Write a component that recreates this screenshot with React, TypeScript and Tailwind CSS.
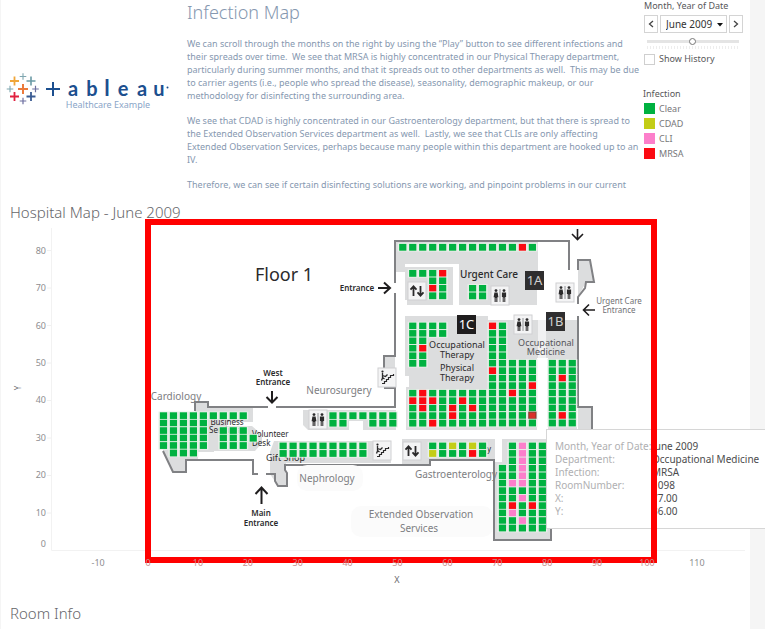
import React from "react";

const roomColors: Record<string, string> = {
  G: "#00b140",
  R: "#fb0a12",
  C: "#c3cd16",
  P: "#fc7fcb",
  D: "#d8302a",
};

// [column index, y of the first room, one letter for each room going down]
const roomColumns: [number, number, string][] = [
  [0, 415.7, "GGGGG"],
  [1, 415.7, "GGGGGG"],
  [2, 415.7, "GGGGGG"],
  [3, 415.7, "GGGGGG"],
  [4, 415.7, "GGGGG"],
  [5, 415.7, "G"],
  [6, 415.7, "G.GGG"],
  [7, 415.7, "G.GGG"],
  [8, 415.7, "G.GGG"],
  [9, 438.2, "G"],
  [12, 446, "GG"],
  [13, 446, "GG"],
  [14, 446, "GG"],
  [15, 446, "GG"],
  [16, 446, "GG"],
  [17, 446, "GG"],
  [18, 446, "GG"],
  [19, 446, "GG"],
  [20, 446, "GG"],
  [17, 415.7, "GG"],
  [18, 415.7, "GG"],
  [19, 415.7, "G"],
  [20, 415.7, "G"],
  [21, 415.7, "GG"],
  [22, 415.7, "GG"],
  [23, 415.7, "GG"],
  [27, 446, "GC"],
  [28, 446, "GG"],
  [29, 446, "CG"],
  [30, 446, "GG"],
  [31, 446, "CR"],
  [32, 446, "GG"],
  [25, 393.3, "GRGGG"],
  [26, 393.3, "RRRGG"],
  [27, 393.3, "GRGGR"],
  [28, 393.3, "GGGGG"],
  [29, 393.3, "GGRRG"],
  [30, 393.3, "GRGGG"],
  [31, 393.3, "GGRGG"],
  [32, 393.3, "GGGGG"],
  [33, 326, "RGGGGGRGGGGGGG"],
  [34, 326, "GGGGGGGGGGGGGG"],
  [35, 363.3, "GGGGRGGGG"],
  [36, 363.3, "GGGGGGGGG"],
  [37, 363.3, "GGGRGGGDG"],
  [39, 363.3, "GGGGGGGGG"],
  [40, 363.3, "GGRGGGGRG"],
  [41, 363.3, "GGGGGGGGG"],
  [24, 247.3, "G"],
  [25, 247.3, "G"],
  [26, 247.3, "G"],
  [27, 247.3, "G"],
  [28, 247.3, "G"],
  [29, 247.3, "G"],
  [30, 247.3, "G"],
  [31, 247.3, "G"],
  [32, 247.3, "G"],
  [33, 247.3, "G"],
  [34, 247.3, "G"],
  [35, 247.3, "G"],
  [36, 247.3, "R"],
  [37, 247.3, "G"],
  [25, 273.4, "G"],
  [26, 273.4, "G"],
  [27, 273.4, "GGRG"],
  [28, 273.4, "RGGG"],
  [31, 288.4, "GG"],
  [32, 288.4, "GG"],
  [25, 326, "GGGGGG"],
  [26, 326, "GGGRGG"],
  [27, 326, "GG"],
  [28, 326, "GG"],
  [34, 468.3, "GGGGGGGGG"],
  [35, 446, "GGGGGPGGRPGG"],
  [36, 446, "PPPPPPGPGGPG"],
  [37, 446, "GGGGGGGGRGGG"],
  [38, 446, "GGGGGGGGGGGG"],
];

function Rooms() {
  return (
    <g>
      {roomColumns.map(([col, top, rooms], n) =>
        rooms.split("").map((kind, row) => {
          if (kind === ".") return null;
          const x = 163.5 + col * 9.97;
          const y = top + row * 7.46;
          return (
            <g key={`${n}-${row}`}>
              <rect x={x - 5} y={y - 4.2} width={10} height={8.4} fill="#e9f0ea" />
              <rect
                x={x - 3.6}
                y={y - 3.4}
                width={7.2}
                height={6.8}
                fill={roomColors[kind]}
                stroke={kind === "D" ? "#7a3a2e" : "none"}
                strokeWidth={1}
              />
            </g>
          );
        }),
      )}
    </g>
  );
}

function Restroom({ x, y }: { x: number; y: number }) {
  return (
    <g transform={`translate(${x} ${y})`}>
      <rect width="18" height="19" fill="#f4f4f5" stroke="#cfd0d2" strokeWidth="1" />
      <path d="M9 3V16" stroke="#77787b" strokeWidth="0.8" />
      <g fill="#2b2a2b">
        <circle cx="5" cy="4.6" r="1.4" />
        <path d="M3.4 6.4H6.6L7.4 11.2H6.4V16H5.3V12H4.7V16H3.6V11.2H2.6Z" />
        <circle cx="13" cy="4.6" r="1.4" />
        <path d="M10.9 6.4H15.1V11H14.3V16H13.3V11.5H12.7V16H11.7V11H10.9Z" />
      </g>
    </g>
  );
}

function Elevator({ x, y }: { x: number; y: number }) {
  return (
    <g transform={`translate(${x} ${y})`}>
      <rect width="18" height="18" fill="#f4f4f5" stroke="#cfd0d2" strokeWidth="1" />
      <path
        d="M5.5 14V4.5M2.5 7.7L5.5 4.4L8.5 7.7M12.5 4V13.5M9.5 10.3L12.5 13.6L15.5 10.3"
        fill="none"
        stroke="#2b2a2b"
        strokeWidth="1.8"
      />
    </g>
  );
}

function Stairs({ x, y }: { x: number; y: number }) {
  return (
    <g transform={`translate(${x} ${y})`}>
      <rect width="18" height="19" fill="#f4f4f5" stroke="#cfd0d2" strokeWidth="1" />
      <path d="M4 15.500H6.500V13.500H8.500V11.500H10.500V9.500H12.500V7.500H15.500V6" fill="none" stroke="#2b2a2b" strokeWidth="1.2" />
      <path d="M4.500 5V10L3.500 12.500M4.500 7.500L7.500 8.500L9.500 6.500M4.500 9.500L6.500 11" fill="none" stroke="#2b2a2b" strokeWidth="1.3" />
      <circle cx="4.5" cy="3.6" r="1.1" fill="#2b2a2b" />
    </g>
  );
}

function Badge({ x, y, label, faint }: { x: number; y: number; label: string; faint?: boolean }) {
  return (
    <g>
      <rect x={x} y={y} width="19" height="19" fill={faint ? "#2f2e2f" : "#1f1d1e"} />
      <text x={x + 9.5} y={y + 14} textAnchor="middle" fontSize="13" fill={faint ? "#d0d0d0" : "#ffffff"}>
        {label}
      </text>
    </g>
  );
}

const yTicks = [80, 70, 60, 50, 40, 30, 20, 10];
const xTicks = [-10, 0, 10, 20, 30, 40, 50, 60, 70, 80, 90, 100, 110];

function HospitalMap() {
  return (
    <svg viewBox="1 220 749 370" className="block w-full overflow-visible" fontFamily="'Noto Sans', sans-serif" role="img" aria-label="Hospital map">
      {/* shaded departments */}
      <g fill="#dcddde">
        <path d="M396 242H545V273H535V305H453V264H405V272H396Z" />
        <path d="M405 267H453V305H407V300H405Z" />
        <path d="M459 268H537V305H459Z" />
        <path d="M405 316H488V387H409V376H405Z" />
        <path d="M406 387H488V430H406Z" />
        <path d="M488 320H577V430H488Z" />
        <path d="M578 408H592V430H578Z" />
        <path d="M578 261H590L594 282H586L578 297Z" />
        <path d="M385 357H395V388H385Z" />
        <path d="M195 402H208V408H253V422H227V426H252L262 435V443L255 451H214V452H198V459H186V472H173L163 450V412H195Z" />
        <path d="M274 441H391V463H286V486H278L270 474V452Z" />
        <path d="M303 410H396V430H308L303 425Z" />
        <path d="M402 439H495V459H430V464H402Z" />
        <path d="M502 439H550V540H495V462H502Z" />
      </g>
      <g fill="#ffffff">
        <path d="M396 272H405V306H396Z" />
        <path d="M537 358H548V430H537Z" />
        <path d="M538 316H546V358H538Z" fillOpacity="0.6" />
        <path d="M538 242H568V316H538Z" />
        <path d="M349 421H363V430H349Z" />
        <path d="M453 264H459V306H453Z" />
      </g>

      {/* outer walls */}
      <g fill="none" stroke="#808184" strokeWidth="2">
        <path d="M195 411V402H208V407H268" />
        <path d="M276 407H395V388H384" />
        <path d="M384 368V356H395V293" />
        <path d="M395 283V241H569V270" />
        <path d="M578 270V260H590L594 282H586L585 288L578 297V304" />
        <path d="M578 316V407H592V430" />
        <path d="M163 451L173 472H186V460H253V474H258" />
        <path d="M266 474H275V481L278 486H287V473L285 470V465H430V460H494V540H551V529" />
      </g>

      <g fill="#fbfbfb">
        <rect x="297" y="465" width="66" height="26" rx="10" />
        <rect x="351" y="506" width="142" height="31" rx="10" />
      </g>

      {/* text printed on the plan */}
      <g fill="#2b2a2b" textAnchor="middle" fontSize="9">
        <text x="284" y="281" fontSize="18">Floor 1</text>
        <g fontSize="8" fontWeight="600">
          <text x="357" y="291">Entrance</text>
          <text x="273" y="376">West</text>
          <text x="273" y="385">Entrance</text>
          <text x="261" y="516">Main</text>
          <text x="261" y="526">Entrance</text>
          <text x="489" y="278" fontSize="10" fontWeight="500">Urgent Care</text>
        </g>
        <text x="457" y="348">Occupational</text>
        <text x="457" y="358">Therapy</text>
        <text x="457" y="371">Physical</text>
        <text x="457" y="381">Therapy</text>
        <text x="546" y="346" fill="#55555a">Occupational</text>
        <text x="546" y="355" fill="#55555a">Medicine</text>
        <g fontSize="8">
          <text x="227" y="425">Business</text>
          <text x="209" y="433" textAnchor="start">Services</text>
          <text x="252" y="437" textAnchor="start">Volunteer</text>
          <text x="252" y="446" textAnchor="start">Desk</text>
          <text x="266" y="461" fontSize="9" textAnchor="start">Gift Shop</text>
          <text x="489" y="452">y</text>
        </g>
        <g fontSize="8" fill="#707074">
          <text x="619" y="304">Urgent Care</text>
          <text x="619" y="313">Entrance</text>
        </g>
      </g>
      <g fill="none" stroke="#1f1d1e" strokeWidth="2">
        <path d="M378 288H389M384 282.500L390 288L384 293.500" />
        <path d="M272 391V402M266.500 397L272 402.500L277.500 397" />
        <path d="M261.500 504V488M255.500 494L261.500 487.500L267.500 494" />
        <path d="M577.500 229V239M572 234L577.500 239.500L583 234" strokeWidth="1.600" />
        <path d="M595 310H584M589 304.500L583.500 310L589 315.500" strokeWidth="1.600" />
      </g>

      <Rooms />

      <Elevator x={408} y={282} />
      <Elevator x={403} y={442} />
      <Restroom x={491} y={286} />
      <Restroom x={556} y={283} />
      <Restroom x={514} y={315} />
      <Restroom x={309} y={410} />
      <Stairs x={378} y={368} />
      <Stairs x={373} y={441} />
      <Badge x={457} y={315} label="1C" />
      <Badge x={525} y={271} label="1A" faint />
      <Badge x={546} y={312} label="1B" faint />

      {/* department names over the rooms */}
      <g fill="#7d7e82" fontSize="10" textAnchor="middle">
        <text x="176" y="400">Cardiology</text>
        <text x="339" y="394">Neurosurgery</text>
        <text x="327" y="482">Nephrology</text>
        <text x="456" y="478">Gastroenterology</text>
        <text x="421" y="518">Extended Observation</text>
        <text x="419" y="532">Services</text>
      </g>

      {/* axes */}
      <path d="M51.500 228V550.500H745" fill="none" stroke="#f2f2f2" />
      <g fontSize="9" fill="#8e8e90">
        {yTicks.map((t) => (
          <g key={t}>
            <path d={`M47 ${550.5 - t * 3.75}H51`} stroke="#f0f0f0" />
            <text x="46" y={553 - t * 3.74} textAnchor="end">{t}</text>
          </g>
        ))}
        <text x="46" y="547" textAnchor="end">0</text>
      </g>
      <text transform="translate(21 388) rotate(-90)" textAnchor="middle" fontSize="8" fill="#6b6b6e">Y</text>
      <text x="397" y="583" textAnchor="middle" fontSize="9" fill="#6b6b6e">X</text>
    </svg>
  );
}

function HighlightAndTicks() {
  return (
    <svg viewBox="1 220 749 370" className="pointer-events-none absolute inset-0 w-full overflow-visible" fontFamily="'Noto Sans', sans-serif" aria-hidden="true">
      <rect x="148" y="222" width="506" height="338" fill="none" stroke="#ff0000" strokeWidth="6" />
      <g fontSize="9" textAnchor="middle">
        {xTicks.map((t) => (
          <text key={t} x={148 + t * 4.99} y="566" fill={t < 0 || t > 100 ? "#8e8e90" : "#c98f8f"}>
            {t}
          </text>
        ))}
      </g>
    </svg>
  );
}

const tooltipRows = [
  ["Month, Year of Date:", "June 2009"],
  ["Department:", "Occupational Medicine"],
  ["Infection:", "MRSA"],
  ["RoomNumber:", "1098"],
  ["X:", "77.00"],
  ["Y:", "36.00"],
];

function Tooltip() {
  return (
    <dl className="absolute left-[545px] top-[209px] grid w-[220px] grid-cols-[97px_1fr] border border-[#d6d6d6] bg-white pt-[10px] pb-[10px] pl-[8px] text-[10px] leading-[13px] whitespace-nowrap">
      {tooltipRows.map(([name, value]) => (
        <React.Fragment key={name}>
          <dt className="text-[#b0b0b2]">{name}</dt>
          <dd className="text-[#4b4b4d]">{value}</dd>
        </React.Fragment>
      ))}
    </dl>
  );
}

const crosses: [number, number, number, string, number][] = [
  [23, 89, 5, "#eb7a3c", 2],
  [14.5, 81, 4.5, "#f0a63a", 1.8],
  [31, 81, 4.5, "#6a9aa5", 1.6],
  [14.5, 96.5, 4.5, "#e0213f", 1.8],
  [31, 96.5, 4.5, "#3b5c93", 1.8],
  [23, 76.5, 3.3, "#7fa6b0", 1.1],
  [10, 89, 3.3, "#7fa6b0", 1.1],
  [35.5, 89, 3.3, "#6d6fa0", 1.2],
  [23, 101, 3.3, "#6d6fa0", 1.2],
];

const logoLetters: [number, string][] = [
  [73, "a"],
  [92, "b"],
  [123, "e"],
  [142, "a"],
  [159, "u"],
];

function Logo() {
  return (
    <svg viewBox="1 70 180 42" className="block h-[42px] w-[180px]" role="img" aria-label="Tableau Healthcare Example">
      {crosses.map(([x, y, r, color, w], i) => (
        <path key={i} d={`M${x - r} ${y}H${x + r}M${x} ${y - r}V${y + r}`} stroke={color} strokeWidth={w} />
      ))}
      <path d="M46 89H60M53 82V96" stroke="#1c4f8f" strokeWidth="2" />
      <g fill="#1c4f8f" fontFamily="Lato, sans-serif" fontSize="20" fontWeight="700" textAnchor="middle">
        {logoLetters.map(([x, c]) => (
          <text key={x} x={x} y="96">{c}</text>
        ))}
        <text x="107" y="96" fontSize="22">l</text>
      </g>
      <circle cx="167.500" cy="87.500" r="1" fill="#1c4f8f" />
      <text x="108" y="108" textAnchor="middle" fontFamily="'Noto Sans', sans-serif" fontSize="9" fill="#8aa5c8">
        Healthcare Example
      </text>
    </svg>
  );
}

const legend = [
  ["Clear", "bg-[#00b140]"],
  ["CDAD", "bg-[#c3cd16]"],
  ["CLI", "bg-[#fc7fcb]"],
  ["MRSA", "bg-[#fb0a12]"],
];

function Filters() {
  return (
    <aside className="w-[106px] shrink-0 text-[9px] leading-[12px] text-[#58585a]">
      <label htmlFor="month" className="block">Month, Year of Date</label>
      <div className="mt-[3px] flex h-[18px] gap-[2px]">
        <button type="button" aria-label="Previous" className="flex w-[14px] items-center justify-center border border-[#d4d4d4]">
          <svg viewBox="0 0 6 8" className="h-[8px] w-[6px]"><path d="M5 1L1.500 4L5 7" fill="none" stroke="#444" strokeWidth="1.300" /></svg>
        </button>
        <div className="relative w-[67px]">
          <select id="month" className="h-full w-full appearance-none border border-[#d4d4d4] bg-white pl-[5px] text-[10px] leading-[14px] text-[#333]">
            <option>June 2009</option>
          </select>
          <svg viewBox="0 0 6 4" className="pointer-events-none absolute right-[4px] top-[8px] h-[4px] w-[6px]"><path d="M0 0H6L3 3.500Z" fill="#111" /></svg>
        </div>
        <button type="button" aria-label="Next" className="flex w-[14px] items-center justify-center border border-[#d4d4d4]">
          <svg viewBox="0 0 6 8" className="h-[8px] w-[6px]"><path d="M1 1L4.500 4L1 7" fill="none" stroke="#444" strokeWidth="1.300" /></svg>
        </button>
      </div>
      <input
        type="range"
        aria-label="Month"
        min="0"
        max="100"
        defaultValue="49"
        className="mt-[4px] ml-[3px] block h-[8px] w-[92px] appearance-none bg-transparent [&::-webkit-slider-runnable-track]:h-[3px] [&::-webkit-slider-runnable-track]:bg-[#e4e4e4] [&::-webkit-slider-thumb]:-mt-[2px] [&::-webkit-slider-thumb]:size-[7px] [&::-webkit-slider-thumb]:appearance-none [&::-webkit-slider-thumb]:rounded-full [&::-webkit-slider-thumb]:border [&::-webkit-slider-thumb]:border-[#777] [&::-webkit-slider-thumb]:bg-white"
      />
      <div className="mt-px ml-[3px] h-[3px] w-[92px] bg-[repeating-linear-gradient(90deg,#ededed_0_1px,transparent_1px_3px)]" />
      <label className="mt-[4px] flex items-center gap-[4px]">
        <input type="checkbox" className="size-[11px] appearance-none border border-[#cfcfcf] bg-white" />
        Show History
      </label>
      <h3 className="mt-[23px] -ml-px">Infection</h3>
      <ul className="mt-px text-[#77777a]">
        {legend.map(([name, color]) => (
          <li key={name} className="flex h-[15px] items-center gap-[4px]">
            <span className={`size-[11px] ${color}`} />
            {name}
          </li>
        ))}
      </ul>
    </aside>
  );
}

export default function App() {
  return (
    <div className="min-h-screen overflow-hidden bg-[#f5f5f5] pl-px pr-[15px] font-['Noto_Sans',sans-serif]">
      <main className="min-h-screen bg-white">
        <header className="flex h-[203px]">
          <div className="w-[186px] shrink-0 pt-[70px]">
            <Logo />
          </div>
          <section className="min-w-0 flex-1 text-[#8698b0]">
            <h1 className="text-[18px] leading-[24px] font-light">Infection Map</h1>
            <div className="mt-[13px] space-y-[12px] text-[9px] leading-[13px] whitespace-pre">
              <p>{"We can scroll through the months on the right by using the “Play” button to see different infections and\ntheir spreads over time.  We see that MRSA is highly concentrated in our Physical Therapy department,\nparticularly during summer months, and that it spreads out to other departments as well.  This may be due\nto carrier agents (i.e., people who spread the disease), seasonality, demographic makeup, or our\nmethodology for disinfecting the surrounding area."}</p>
              <p>{"We see that CDAD is highly concentrated in our Gastroenterology department, but that there is spread to\nthe Extended Observation Services department as well.  Lastly, we see that CLIs are only affecting\nExtended Observation Services, perhaps because many people within this department are hooked up to an\nIV."}</p>
              <p>Therefore, we can see if certain disinfecting solutions are working, and pinpoint problems in our current</p>
            </div>
          </section>
          <Filters />
        </header>
        <section>
          <h2 className="h-[17px] pl-[9px] text-[15px] leading-[18px] font-light text-[#66666a]">Hospital Map - June 2009</h2>
          <div className="relative">
            <HospitalMap />
            <Tooltip />
            <HighlightAndTicks />
          </div>
        </section>
        <h2 className="mt-[14px] pl-[9px] text-[15px] leading-[18px] font-light text-[#66666a]">Room Info</h2>
      </main>
    </div>
  );
}
